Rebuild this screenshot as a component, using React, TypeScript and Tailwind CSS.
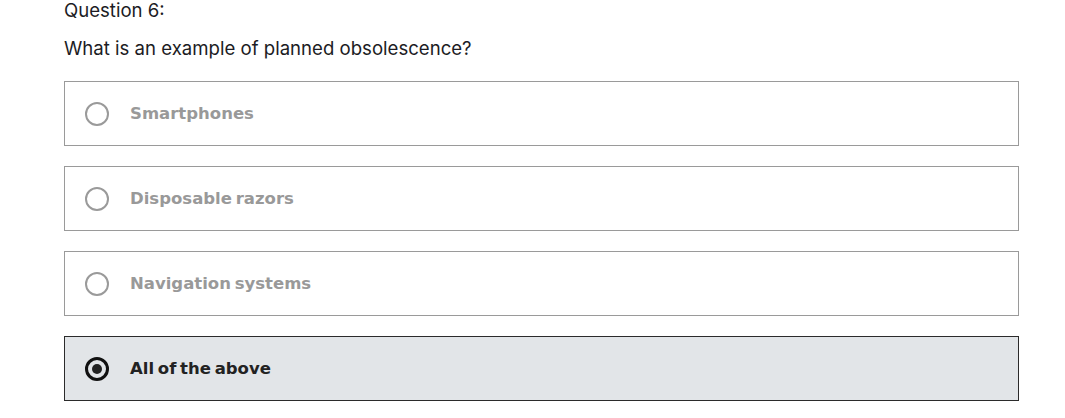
import React from "react";

const options = [
  { label: "Smartphones", selected: false },
  { label: "Disposable razors", selected: false },
  { label: "Navigation systems", selected: false },
  { label: "All of the above", selected: true },
];

export default function App() {
  return (
    <div className="w-[1065px] h-[418px] bg-white overflow-hidden" style={{ fontFamily: "Inter, 'Liberation Sans', sans-serif" }}>
      <div className="pl-[64px] w-[1019px]">
        <div className="text-[18.6px] leading-[20px] text-[#1c1c24]">Question 6:</div>
        <div className="text-[18.6px] leading-[20px] text-[#1c1c24] mt-[18px]">What is an example of planned obsolescence?</div>
        <div className="mt-[23px] flex flex-col gap-[20px]">
          {options.map((o) => (
            <div
              key={o.label}
              className={
                o.selected
                  ? "h-[65px] border border-[#2b2b2b] bg-[#e2e5e8] flex items-center pl-[20px]"
                  : "h-[65px] border border-[#9a9a9a] bg-white flex items-center pl-[20px]"
              }
            >
              {o.selected ? (
                <div className="w-[24px] h-[24px] rounded-full border-[3px] border-[#111] flex items-center justify-center">
                  <div className="w-[10px] h-[10px] rounded-full bg-[#222]" />
                </div>
              ) : (
                <div className="w-[24px] h-[24px] rounded-full border-2 border-[#9a9a9a]" />
              )}
              <span
                className={
                  o.selected
                    ? "ml-[21px] pt-[2px] text-[16.5px] font-bold text-[#222] [word-spacing:-2px]"
                    : "ml-[21px] pt-[2px] text-[16.5px] font-bold text-[#999] [word-spacing:-2px]"
                }
                style={{ fontFamily: "'DejaVu Sans', 'Liberation Sans', sans-serif" }}
              >
                {o.label}
              </span>
            </div>
          ))}
        </div>
      </div>
    </div>
  );
}
